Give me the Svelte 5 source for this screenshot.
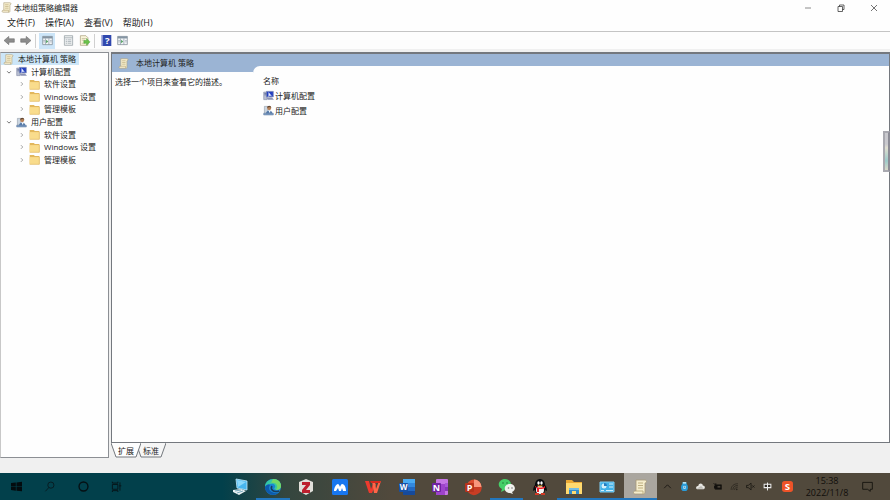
<script>
	let selected = $state('root');
	let view = $state('extended');
	let closed = $state({});

	const tree = [
		{ id: 'root', level: 0, icon: 'scroll', label: '本地计算机 策略' },
		{ id: 'computer', level: 1, icon: 'computer', label: '计算机配置' },
		{ id: 'c-software', level: 2, parent: 'computer', icon: 'folder', label: '软件设置' },
		{ id: 'c-windows', level: 2, parent: 'computer', icon: 'folder', label: 'Windows 设置' },
		{ id: 'c-templates', level: 2, parent: 'computer', icon: 'folder', label: '管理模板' },
		{ id: 'user', level: 1, icon: 'user', label: '用户配置' },
		{ id: 'u-software', level: 2, parent: 'user', icon: 'folder', label: '软件设置' },
		{ id: 'u-windows', level: 2, parent: 'user', icon: 'folder', label: 'Windows 设置' },
		{ id: 'u-templates', level: 2, parent: 'user', icon: 'folder', label: '管理模板' }
	];

	const menus = ['文件(F)', '操作(A)', '查看(V)', '帮助(H)'];

	const tools = [
		{ icon: 'back', label: '后退' },
		{ icon: 'forward', label: '前进', divider: true },
		{ icon: 'panel', label: '显示/隐藏控制台树', pressed: true },
		{ icon: 'props', label: '属性' },
		{ icon: 'export', label: '导出列表', divider: true },
		{ icon: 'help', label: '帮助' },
		{ icon: 'panel', label: '显示/隐藏操作窗格' }
	];

	const items = [
		{ icon: 'computer', label: '计算机配置' },
		{ icon: 'user', label: '用户配置' }
	];

	const tabs = [
		{ id: 'extended', label: '扩展' },
		{ id: 'standard', label: '标准' }
	];

	const system = [
		{ icon: 'start', label: '开始' },
		{ icon: 'search', label: '搜索' },
		{ icon: 'cortana', label: 'Cortana' },
		{ icon: 'taskview', label: '任务视图' }
	];

	const apps = [
		{ icon: 'pc', label: '此电脑' },
		{ icon: 'edge', label: 'Edge', running: true },
		{ icon: 'zotero', label: 'Z' },
		{ icon: 'mountain', label: 'M' },
		{ icon: 'wps', label: 'WPS' },
		{ icon: 'word', label: 'Word' },
		{ icon: 'onenote', label: 'OneNote' },
		{ icon: 'powerpoint', label: 'PowerPoint' },
		{ icon: 'wechat', label: '微信', running: true },
		{ icon: 'qq', label: 'QQ' },
		{ icon: 'explorer', label: '文件资源管理器', running: true },
		{ icon: 'control', label: '控制面板', running: true },
		{ icon: 'scroll', label: '组策略', running: true, active: true }
	];

	const tray = ['chevron', 'guard', 'cloud', 'battery', 'wifi', 'mute', 'ime'];

	let rows = $derived(tree.filter((n) => !n.parent || !closed[n.parent]));

	function toggle(node) {
		if (node.level === 1) closed[node.id] = !closed[node.id];
	}
</script>

{#snippet icon(name)}
	<svg class="icon {name}" viewBox="0 0 16 16" aria-hidden="true">
		{#if name === 'scroll'}
			<path d="M4 1h9c2 0 2 3 0 3v9c0 2-1 2-2 2H3c-2 0-2-3 0-3h1z" fill="#f5edcd" stroke="#a89b78" stroke-width=".8" />
			<path d="M4 12h7v3M6 4h5M6 6.500h5M6 9h5" fill="none" stroke="#b9a878" stroke-width=".9" />
		{:else if name === 'computer'}
			<path d="M1 3h5v11H1z" fill="#b8bfd2" stroke="#6c7694" stroke-width=".7" />
			<path d="M5 2h10v8H5z" fill="#2440c0" stroke="#7e8bb4" />
			<path d="M8 3l5 6-3-1-2 2z" fill="#e9efff" />
			<path d="M5 11h8l3 3H7z" fill="#8b93b4" />
			<path d="M2 5h3M2 7h3" stroke="#4f5e8f" />
		{:else if name === 'user'}
			<path d="M2 2h5v10H2z" fill="#cbd5e0" stroke="#7f8b99" stroke-width=".7" />
			<circle cx="9" cy="4.500" r="3" fill="#b78259" />
			<path d="M6 4c0-4 6-4 6 0l-2-1z" fill="#604632" />
			<path d="M4 14c0-8 10-8 10 0z" fill="#547baa" />
			<path d="M8 8l2 4 1-4z" fill="#fff" />
			<path d="M1 12h14v2.500H1z" fill="#82a0c6" stroke="#53709a" stroke-width=".7" />
		{:else if name === 'folder'}
			<path d="M1 3V1.500h6L8.500 3H15v11H1z" fill="#e2b75c" />
			<path d="M1 4.500h14V15H1z" fill="#f9dc8c" />
			<path d="M1 15h14V4" fill="none" stroke="#e1b860" />
		{:else if name === 'back' || name === 'forward'}
			<path d={name === 'back' ? 'M0 8l7-6v3.500h8v5H7V14z' : 'M16 8L9 2v3.500H1v5h8V14z'} fill="#8d8d8d" stroke="#666" stroke-width=".8" />
		{:else if name === 'panel'}
			<path d="M1 2h14v12H1z" fill="#f4f6f8" stroke="#76838e" />
			<path d="M1 2h14v3H1z" fill="#8494a2" />
			<path d="M5 5v9M10 5v9M2 8h2M2 10h2M12 8h2M12 10h2" stroke="#8494a2" />
			<path d="M6 7l3 2.500L6 12z" fill="#4c9c5c" />
		{:else if name === 'props'}
			<path d="M2 1h12v14H2z" fill="#eef0f1" stroke="#8f999f" />
			<path d="M2 4h12M4 7h2M7 7h5M4 9.500h2M7 9.500h5M4 12h2M7 12h5" stroke="#9ba5ab" />
		{:else if name === 'export'}
			<path d="M2 1h8l3 3v11H2z" fill="#fbf6dc" stroke="#a69c78" />
			<path d="M4 5h6M4 7.500h5M4 12h5" stroke="#b9b08d" />
			<path d="M7 8h4V5l5 5-5 5v-3H7z" fill="#6cc24a" stroke="#3c9630" stroke-width=".6" />
		{:else if name === 'help'}
			<path d="M1 0h14v16H1z" fill="#3048ae" />
			<path d="M1 0h2v16H1z" fill="#8793d2" />
			<text x="9" y="13" text-anchor="middle" fill="#fff" font-size="14" font-weight="700">?</text>
		{:else if name === 'start'}
			<path d="M0 3l7-1v5.500H0zM8 2l8-1v6.500H8zM0 8.500h7V14l-7-1zM8 8.500h8V15l-8-1z" fill="#030b0e" />
		{:else if name === 'search'}
			<circle cx="10" cy="6" r="4.500" fill="none" stroke="#08191e" stroke-width="1.300" />
			<path d="M7 9.500L2 15" stroke="#08191e" stroke-width="1.300" />
		{:else if name === 'cortana'}
			<circle cx="8" cy="8" r="6.500" fill="none" stroke="#051014" stroke-width="2" />
		{:else if name === 'taskview'}
			<path d="M2 5h8v7H2zM2 1v2h8V1M2 16v-2h8v2M13 2v12M12 7h3" fill="none" stroke="#061519" stroke-width="1.400" />
		{:else if name === 'pc'}
			<path d="M4 0l11 2v9L5 9z" fill="#48b6ee" stroke="#c4ebfc" stroke-width=".8" />
			<path d="M5 1l9 2-8 5z" fill="#8ad8fb" />
			<path d="M1 11l8-1 5 2-7 4-6-3z" fill="#e9f1f3" />
			<path d="M3 12l6-1M5 14l6-2" stroke="#7aabbd" />
		{:else if name === 'edge'}
			<circle cx="8" cy="8" r="8" fill="#1b83d2" />
			<path d="M0 8C0-2 16-3 16 7c0 4-4 5-7 3 3-3 0-6-3-5C3 5 1 6 0 8z" fill="#36c7a3" />
			<path d="M8 0c5 0 8 3 8 7 0 3-3 4-5 4 3-4 0-8-5-7z" fill="#75d866" />
			<path d="M5 6c-3 4 1 9 8 8-4 4-13 1-13-6 1-2 3-3 5-2z" fill="#0d5aac" />
			<path d="M7 7c-2 3 1 7 7 5" fill="none" stroke="#173e5d" stroke-width="1.500" />
		{:else if name === 'zotero'}
			<path d="M8 0l7 3v9l-7 4-7-4V3z" fill="#e1dfda" />
			<path d="M4 3h8v3l-4 5h4v3H4v-3l4-5H4z" fill="#bd1f2d" />
		{:else if name === 'mountain'}
			<rect width="16" height="16" rx="1.500" fill="#1877ef" />
			<path d="M2 12c0-3 2-7 4-7 1 0 2 3 2 3s1-3 2-3c3 0 4 4 4 7h-3l-1-3-1 3H7L6 9l-2 3z" fill="#fff" />
		{:else if name === 'wps'}
			<path d="M0 2h4l2 8 2-5h3l-4 9H4z" fill="#ed3a2e" />
			<path d="M7 2h3l1 8 3-8h2l-4 12H9z" fill="#ff6548" />
			<path d="M5 2h11l-1 2H6z" fill="#d9281d" />
		{:else if name === 'word'}
			<path d="M4 0h12v4H4z" fill="#49aaf2" />
			<path d="M4 4h12v4H4z" fill="#3289df" />
			<path d="M4 8h12v4H4z" fill="#2268c1" />
			<path d="M4 12h12v4H4z" fill="#164a9b" />
			<rect y="4" width="9" height="9" rx="1" fill="#164fa4" />
			<text x="4.500" y="11" text-anchor="middle" fill="#fff" font-size="8" font-weight="700">W</text>
		{:else if name === 'onenote'}
			<rect x="4" width="12" height="16" rx="1" fill="#c676e5" />
			<path d="M4 5h9v11H4z" fill="#9e43cb" />
			<path d="M13 4h3v4h-3z" fill="#a857d7" />
			<path d="M13 8h3v4h-3z" fill="#8737b9" />
			<rect y="4" width="9" height="9" rx="1" fill="#7022a2" />
			<text x="4.500" y="11.500" text-anchor="middle" fill="#fff" font-size="9" font-weight="700">N</text>
		{:else if name === 'powerpoint'}
			<circle cx="9" cy="8" r="7.500" fill="#dc4f31" />
			<path d="M9 .5A7.500 7.500 0 0 1 16.500 8H9z" fill="#f8977d" />
			<path d="M9 8h7.500A7.500 7.500 0 0 1 3 13z" fill="#c93d24" />
			<rect y="4" width="9" height="9" rx="1" fill="#b7331b" />
			<text x="4.500" y="11.500" text-anchor="middle" fill="#fff" font-size="9" font-weight="700">P</text>
		{:else if name === 'wechat'}
			<path d="M6 0c8 0 8 11 0 11l-4 2 1-3C-3 7 0 0 6 0z" fill="#45cf68" />
			<path d="M11 5c-7 0-7 9 0 9l3 1-1-2c5-2 3-8-2-8z" fill="#f0f1ed" />
			<circle cx="4" cy="4" r=".8" fill="#247a37" /><circle cx="8" cy="4" r=".8" fill="#247a37" />
			<circle cx="9.500" cy="9" r=".8" fill="#777" /><circle cx="13" cy="9" r=".8" fill="#777" />
		{:else if name === 'qq'}
			<path d="M3 6c0-8 10-8 10 0 1 1 2 3 2 6l-2-1-1 4H4l-1-4-2 1c0-3 1-5 2-6z" fill="#080b0d" />
			<ellipse cx="8" cy="11" rx="4" ry="4" fill="#f4f4f4" />
			<ellipse cx="6.500" cy="4" rx="1.200" ry="1.700" fill="#fff" /><ellipse cx="9.500" cy="4" rx="1.200" ry="1.700" fill="#fff" />
			<path d="M5 6.500h6L8 8z" fill="#f7a41d" />
			<path d="M3 7c3 2 7 2 10 0v2c-2 1-4 1-6 1v3H5V9L3 8z" fill="#ef2029" />
			<path d="M3 14h4v2H3zM9 14h4v2H9z" fill="#d33a25" />
		{:else if name === 'explorer'}
			<path d="M0 1h6l2 2h8v11H0z" fill="#eba935" />
			<path d="M0 4h16v11H0z" fill="#ffda70" />
			<path d="M3 9h10v6h-3v-3H6v3H3z" fill="#358bc7" />
			<path d="M3 9h10v2H3z" fill="#74bce2" />
		{:else if name === 'control'}
			<path d="M1 3h14v10H1z" fill="#40b1e8" stroke="#7fcdf2" />
			<circle cx="5" cy="7" r="2.500" fill="#d4effa" />
			<path d="M5 7V4a3 3 0 0 1 3 3z" fill="#237cc0" />
			<path d="M10 5h4M10 8h4M2 11.500h3M7 11.500h7" stroke="#d4effa" />
		{:else if name === 'chevron'}
			<path d="M2 11l6-6 6 6" fill="none" stroke="#151310" stroke-width="1.500" />
		{:else if name === 'guard'}
			<path d="M5 0h6l1 4c3 2 3 11-1 12H5C1 15 1 6 4 4z" fill="#299bd9" />
			<path d="M5 0h6v3H5z" fill="#b5e1f2" />
			<path d="M6 7h4v5H6z" fill="#d8eff7" /><circle cx="8" cy="9" r="1" fill="#19669a" />
		{:else if name === 'cloud'}
			<path d="M4 13C-2 13 0 6 4 7c1-6 8-5 8-1 5 0 5 7 0 7z" fill="#e7e6e2" />
			<path d="M1 12l8-5 5 5z" fill="#bebcb6" />
		{:else if name === 'battery'}
			<path d="M4 5h11v8H4zM2 7h2v4H2" fill="#13110e" stroke="#13110e" />
			<path d="M1 2l4 4M5 2v4M7 8h6" stroke="#13110e" stroke-width="1.500" />
			<path d="M8 7h5v3H8z" fill="#494238" />
		{:else if name === 'wifi'}
			<path d="M2 14C2 7 7 3 14 3M5 14c0-5 4-8 9-8M8 14c0-3 3-5 6-5" fill="none" stroke="#26221c" stroke-width="1.300" />
			<circle cx="12" cy="13" r="1.500" fill="#26221c" />
		{:else if name === 'mute'}
			<path d="M1 6h3l5-4v12l-5-4H1zM11 6l4 4M15 6l-4 4" fill="none" stroke="#171410" stroke-width="1.400" />
		{:else if name === 'ime'}
			<path d="M2 4h12v6H2z" fill="#312d26" stroke="#eee" stroke-width="1.800" />
			<path d="M8 1v14" stroke="#eee" stroke-width="1.800" />
		{:else if name === 'sogou'}
			<rect width="16" height="16" rx="4" fill="#ed5328" />
			<text x="8" y="13" text-anchor="middle" fill="#fff" font-size="14" font-weight="700">S</text>
		{:else if name === 'notify'}
			<path d="M1 2h14v10h-3v3l-4-3H1z" fill="none" stroke="#14120e" stroke-width="1.300" />
		{:else if name === 'minimize'}
			<path d="M2 8h12" stroke="#666" stroke-width="1.500" />
		{:else if name === 'restore'}
			<path d="M2 5h9v10H2zM5 5V2h9v9h-3" fill="none" stroke="#333" stroke-width="1.500" />
		{:else if name === 'close'}
			<path d="M2 2l12 12M14 2L2 14" stroke="#444" stroke-width="1.500" />
		{:else if name === 'open'}
			<path d="M3 6l5 5 5-5" fill="none" stroke="#444" stroke-width="2" />
		{:else if name === 'collapsed'}
			<path d="M5 3l5 5-5 5" fill="none" stroke="#888" stroke-width="2" />
		{/if}
	</svg>
{/snippet}

<div class="desktop">
	<header class="titlebar">
		{@render icon('scroll')}
		<h1>本地组策略编辑器</h1>
		<div class="window-buttons">
			<button aria-label="最小化">{@render icon('minimize')}</button>
			<button aria-label="还原">{@render icon('restore')}</button>
			<button aria-label="关闭">{@render icon('close')}</button>
		</div>
	</header>

	<nav class="menubar">
		{#each menus as menu}
			<button>{menu}</button>
		{/each}
	</nav>

	<div class="toolbar">
		{#each tools as tool}
			<button aria-label={tool.label} class:pressed={tool.pressed}>{@render icon(tool.icon)}</button>
			{#if tool.divider}<span class="divider"></span>{/if}
		{/each}
	</div>

	<main>
		<aside>
			<ul class="tree" role="tree">
				{#each rows as node (node.id)}
					<li class="level{node.level}" role="treeitem" aria-selected={selected === node.id}>
						{#if node.level > 0}
							<button class="twisty" aria-label="展开或折叠" onclick={() => toggle(node)}>
								{@render icon(node.level === 1 && !closed[node.id] ? 'open' : 'collapsed')}
							</button>
						{/if}
						<button class="node" class:selected={selected === node.id} onclick={() => (selected = node.id)}>
							{@render icon(node.icon)}<span>{node.label}</span>
						</button>
					</li>
				{/each}
			</ul>
		</aside>

		<div class="content">
			<section class="pane">
				<div class="description">
					<h2>{@render icon('scroll')}本地计算机 策略</h2>
					<p>选择一个项目来查看它的描述。</p>
				</div>
				<div class="list">
					<h3>名称</h3>
					{#each items as item}
						<button>{@render icon(item.icon)}<span>{item.label}</span></button>
					{/each}
				</div>
			</section>
			<div class="tabs">
				{#each tabs as tab (tab.id)}
					<button class:current={view === tab.id} onclick={() => (view = tab.id)}>
						<svg viewBox="0 0 30 15" aria-hidden="true"><path d="M0 0l5 14h20l5-14" /></svg>
						<span>{tab.label}</span>
					</button>
				{/each}
			</div>
		</div>
		<div class="side-handle"></div>
	</main>

	<div class="statusbar"></div>

	<footer class="taskbar">
		<div class="system">
			{#each system as item}
				<button aria-label={item.label}>{@render icon(item.icon)}</button>
			{/each}
		</div>
		<div class="apps">
			{#each apps as app}
				<button aria-label={app.label} class:running={app.running} class:active={app.active}>{@render icon(app.icon)}</button>
			{/each}
		</div>
		<div class="tray">
			{#each tray as name}
				<button aria-label={name}>{@render icon(name)}</button>
			{/each}
		</div>
		<button class="input-method" aria-label="搜狗输入法">{@render icon('sogou')}</button>
		<div class="clock"><time>15:38</time><time>2022/11/8</time></div>
		<button class="notifications" aria-label="通知">{@render icon('notify')}</button>
	</footer>
</div>

<style>
	:global(body) {
		margin: 0;
	}

	.desktop {
		display: flex;
		flex-direction: column;
		height: 100vh;
		overflow: hidden;
		background: #f0f0f0;
		color: #222;
		font-family: "Open Sans", "Noto Sans CJK SC", sans-serif;
		font-size: 8px;
		line-height: 12px;
	}

	button {
		display: flex;
		align-items: center;
		justify-content: center;
		margin: 0;
		padding: 0;
		border: 0;
		background: none;
		color: inherit;
		font: inherit;
		white-space: nowrap;
	}

	h1,
	h2,
	h3,
	p,
	ul {
		margin: 0;
		padding: 0;
		font-size: 8px;
		font-weight: 400;
		list-style: none;
	}

	.icon {
		display: block;
		flex: none;
		width: 11px;
		height: 11px;
		overflow: visible;
	}

	.titlebar {
		display: flex;
		align-items: center;
		gap: 2px;
		height: 15px;
		padding-left: 1px;
		background: #fefefe;
	}

	.window-buttons {
		display: flex;
		margin-left: auto;
	}

	.window-buttons button {
		width: 33px;
		height: 15px;
	}

	.window-buttons .icon {
		width: 8px;
		height: 8px;
	}

	.menubar {
		display: flex;
		gap: 10px;
		height: 16px;
		padding-left: 7px;
		border-bottom: 1px solid #c4c4c4;
		background: #fefefe;
		font-size: 9px;
	}

	.toolbar {
		display: flex;
		align-items: center;
		height: 17px;
		padding-left: 1px;
		background: #fdfdfd;
	}

	.toolbar button {
		width: 16px;
		height: 16px;
	}

	.toolbar .pressed {
		margin-right: 5px;
		background: #cce5f8;
	}

	.divider {
		width: 1px;
		height: 14px;
		margin: 0 3px 0 2px;
		background: #d0d0d0;
	}

	main {
		position: relative;
		display: flex;
		flex: 1;
		gap: 2px;
		min-height: 0;
		margin-top: 3px;
	}

	aside {
		flex: none;
		box-sizing: border-box;
		width: 109px;
		border: 1px solid #8c8f94;
		border-left-color: #c8c8c8;
		background: #fefefe;
	}

	/* nine rows share the height so they stay evenly spaced */
	.tree {
		display: grid;
		grid-template-rows: repeat(9, 1fr);
		height: 113px;
	}

	.tree li {
		display: flex;
		align-items: center;
	}

	.level1 {
		padding-left: 2px;
	}

	.level2 {
		padding-left: 15px;
	}

	.twisty {
		width: 12px;
		height: 12px;
	}

	.twisty .icon {
		width: 6px;
		height: 6px;
	}

	.node {
		gap: 4px;
		height: 12px;
		padding: 0 1px;
	}

	.level0 .node {
		padding: 0 3px 0 2px;
	}

	.selected {
		background: #cce6f8;
	}

	.content {
		display: flex;
		flex: 1;
		flex-direction: column;
		min-width: 0;
	}

	.pane {
		display: flex;
		flex: 1;
		border: 1px solid #74787e;
		border-top-width: 2px;
		background: #9bb4d4;
	}

	.description {
		display: flex;
		flex-direction: column;
		width: 141px;
	}

	.description h2 {
		display: flex;
		align-items: center;
		gap: 7px;
		height: 18px;
		padding-left: 6px;
	}

	.description p {
		flex: 1;
		padding: 4px 0 0 3px;
		background: #fefefe;
	}

	.list {
		display: flex;
		flex: 1;
		flex-direction: column;
		align-items: flex-start;
		margin-top: 12px;
		padding: 7px 0 0 10px;
		border-top-left-radius: 7px;
		background: #fefefe;
	}

	.list h3 {
		line-height: 15px;
	}

	.list button {
		gap: 1px;
		height: 15px;
	}

	.tabs {
		display: flex;
		height: 15px;
	}

	.tabs button {
		position: relative;
		width: 30px;
		height: 15px;
	}

	.tabs button + button {
		margin-left: -5px;
	}

	.tabs svg {
		position: absolute;
		inset: 0;
		fill: #f6f6f6;
		stroke: #74787e;
	}

	.tabs span {
		position: relative;
	}

	.tabs .current {
		z-index: 1;
	}

	.tabs .current svg {
		fill: #fefefe;
	}

	/* pull-out handle lying over the window edge */
	.side-handle {
		position: absolute;
		top: 79px;
		right: 0;
		box-sizing: border-box;
		width: 7px;
		height: 41px;
		border: 2px solid #a9a9b0;
		border-right-color: #8b8b95;
		background: linear-gradient(#c9c9ce 30%, #e0dfd0 40%, #9ccac9 75%, #d9d9c8);
	}

	.statusbar {
		height: 15px;
		background: #f0f0f0;
	}

	.taskbar {
		display: flex;
		flex: none;
		height: 27px;
		background: linear-gradient(90deg, #02404b 25%, #34463f 32%, #51493c 44%, #51493c);
	}

	.taskbar button {
		height: 27px;
	}

	.system {
		display: grid;
		grid-template-columns: repeat(4, 1fr);
		width: 133px;
	}

	.apps {
		display: grid;
		grid-template-columns: repeat(13, 1fr);
		width: 434px;
		margin-left: 90px;
	}

	.apps .icon {
		width: 16px;
		height: 16px;
	}

	.apps button {
		box-sizing: border-box;
		padding-top: 2px;
		border-bottom: 2px solid transparent;
	}

	.apps .running {
		border-bottom-color: #2276bd;
	}

	.apps .active {
		background: #aaa69f;
	}

	.tray {
		display: grid;
		grid-template-columns: repeat(7, 1fr);
		width: 117px;
		margin-left: auto;
	}

	.tray .icon {
		width: 9px;
		height: 9px;
	}

	.input-method {
		width: 23px;
	}

	.clock {
		display: flex;
		flex-direction: column;
		justify-content: center;
		width: 56px;
		color: #100e0b;
		font-size: 9px;
		text-align: center;
	}

	.notifications {
		width: 24px;
		margin-right: 11px;
	}
</style>
